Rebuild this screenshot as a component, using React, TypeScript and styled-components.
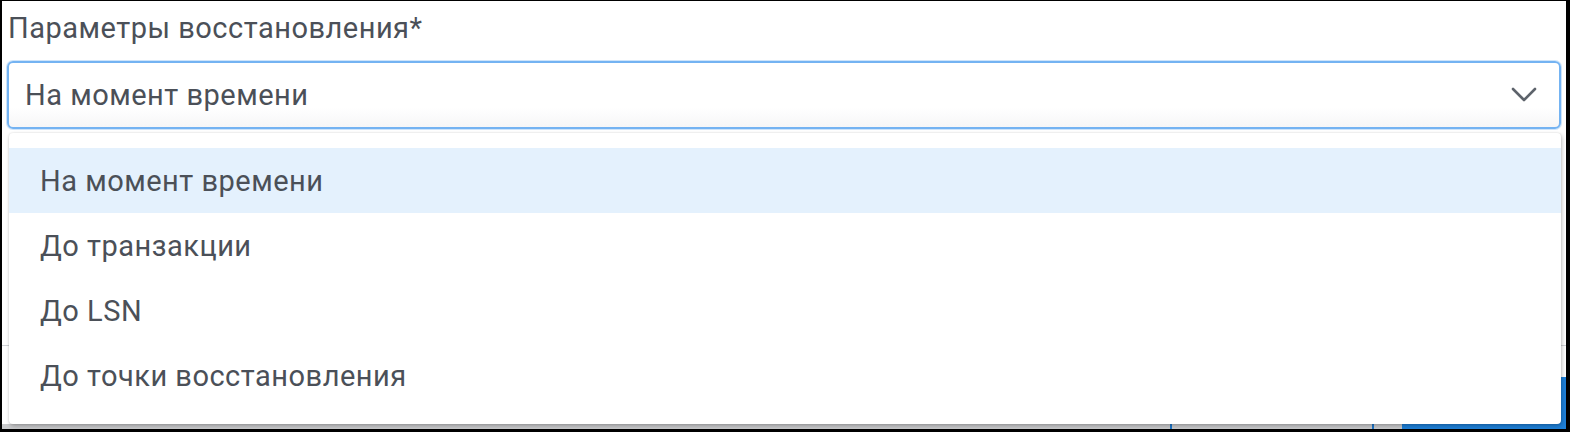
import React from "react";
import styled, { createGlobalStyle } from "styled-components";

const Global = createGlobalStyle`
  html, body { margin: 0; padding: 0; background: #000; }
  body { font-family: Roboto, "Noto Sans", "Liberation Sans", sans-serif; }
  #root { padding: 1px 4px 3px 2px; width: 1570px; height: 432px; box-sizing: border-box; }
`;

const Page = styled.div`
  position: relative;
  background: #fff;
  height: 428px;
  display: flex;
  flex-direction: column;
  padding: 10px 5px 0 5px;
  box-sizing: border-box;
  overflow: hidden;
`;

const Label = styled.div`
  font-size: 29px;
  letter-spacing: 0.5px;
  line-height: 34px;
  color: #4b5058;
  padding-left: 1px;
`;

const SelectWrap = styled.div`
  position: relative;
  margin-top: 16px;
  z-index: 2;
`;

const SelectBox = styled.div`
  height: 68px;
  box-sizing: border-box;
  border: 2px solid #74b3f2;
  border-radius: 6px;
  box-shadow: 0 0 0 1px rgba(116, 179, 242, 0.35);
  background: linear-gradient(#ffffff 70%, #f6f6f7);
  display: flex;
  align-items: center;
  justify-content: space-between;
  padding: 0 22px 0 16px;
  font-size: 29px;
  letter-spacing: 0.5px;
  color: #4b5058;
`;

const Menu = styled.ul`
  position: absolute;
  top: calc(100% + 4px);
  left: 2px;
  right: 0;
  margin: 0;
  padding: 15px 0 16px;
  list-style: none;
  background: #fff;
  border-radius: 4px;
  box-shadow: 1px 2px 4px rgba(0, 0, 0, 0.25), 0 0 2px rgba(0, 0, 0, 0.12);
`;

const Item = styled.li<{ $active?: boolean }>`
  height: 65px;
  display: flex;
  align-items: center;
  padding-left: 31px;
  font-size: 29px;
  letter-spacing: 0.5px;
  color: #4b5058;
  background: ${(p) => (p.$active ? "#e4f1fd" : "transparent")};
`;

const Divider = styled.div`
  margin: 216px -5px 0;
  height: 1px;
  background: #cfd2d6;
`;

const Footer = styled.div`
  margin: 31px -5px 0;
  flex: 1;
  display: flex;
  align-items: flex-end;
`;

const Track = styled.div`
  flex: 1;
  height: 5px;
  background: #c9cacc;
  display: flex;
`;

const Cell = styled.div<{ $w: number }>`
  width: ${(p) => p.$w}px;
  border-right: 2px solid #1f77c9;
`;

const PrimaryButton = styled.div`
  width: 164px;
  align-self: stretch;
  background: #1e80d9;
`;

const Chevron = () => (
  <svg width="26" height="16" viewBox="0 0 26 16" fill="none">
    <path d="M2 2 L13 13 L24 2" stroke="#5d636b" strokeWidth="2.6" strokeLinecap="round" strokeLinejoin="round" />
  </svg>
);

const options = ["На момент времени", "До транзакции", "До LSN", "До точки восстановления"];

export default function App() {
  return (
    <>
      <Global />
      <Page>
        <Label>Параметры восстановления*</Label>
        <SelectWrap>
          <SelectBox>
            <span>На момент времени</span>
            <Chevron />
          </SelectBox>
          <Menu>
            {options.map((o, i) => (
              <Item key={o} $active={i === 0}>
                {o}
              </Item>
            ))}
          </Menu>
        </SelectWrap>
        <Divider />
        <Footer>
          <Track>
            <Cell $w={1168} />
            <Cell $w={200} />
          </Track>
          <PrimaryButton />
        </Footer>
      </Page>
    </>
  );
}
